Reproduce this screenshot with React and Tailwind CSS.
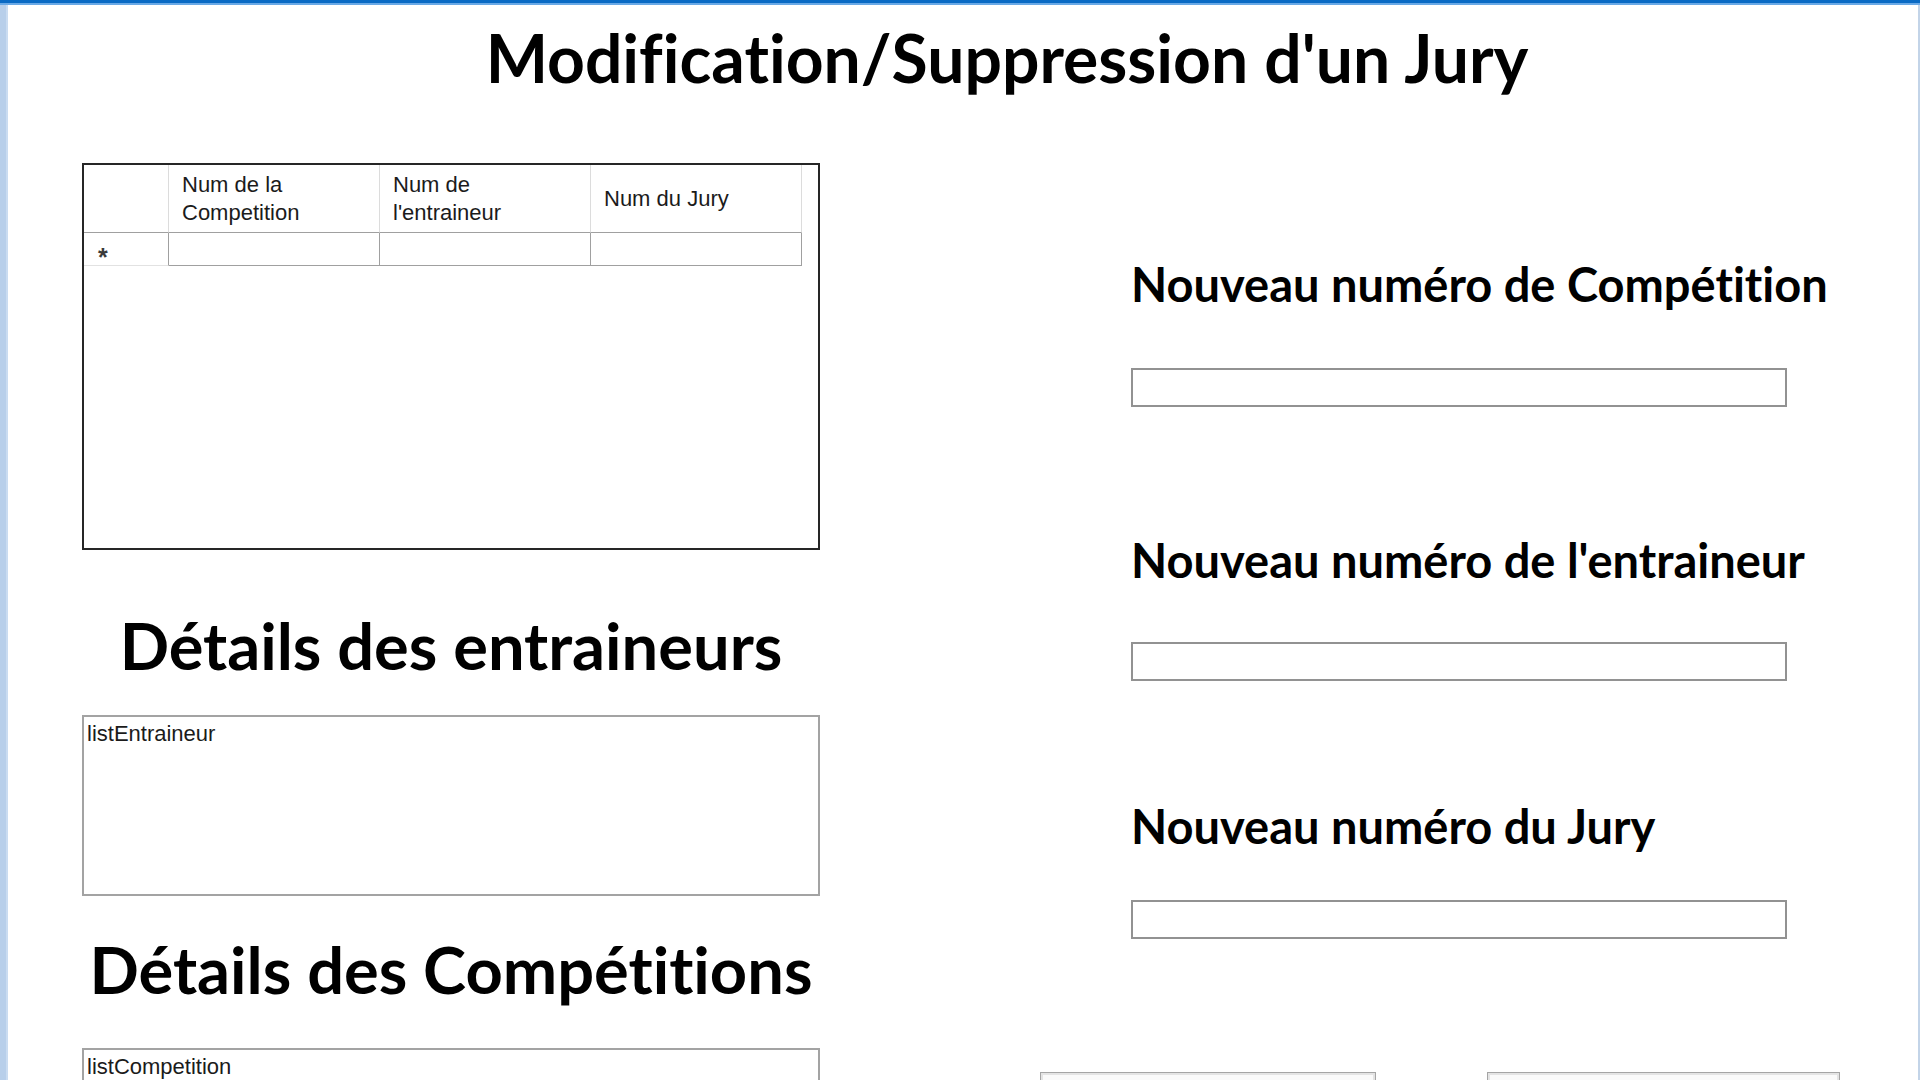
import React from 'react';

const bigTitle = "font-['Lato',sans-serif] font-bold text-black leading-none whitespace-nowrap [font-variant-ligatures:none]";
const cellText = "font-['Liberation_Sans',Arial,sans-serif] text-[22px] leading-[28px] text-[#1b1b1b]";

const columns = [
    ['Num de la', 'Competition'],
    ['Num de', "l'entraineur"],
    ['Num du Jury'],
];

const JuryGrid = () => {
    return (
        <div className="mt-[72px] h-[387px] border-2 border-[#262626] bg-white">
            {/* en-tetes */}
            <div className="flex h-[68px]">
                <div className="w-[85px] border-r border-b border-r-[#dcdcdc] border-b-[#a0a0a0]" />
                {columns.map((lines, i) => (
                    <div
                        key={i}
                        className={"w-[211px] flex items-center pl-[13px] border-r border-b border-r-[#dcdcdc] border-b-[#a0a0a0] " + cellText}
                    >
                        <div>
                            {lines.map((l, j) => (
                                <div key={j}>{l}</div>
                            ))}
                        </div>
                    </div>
                ))}
            </div>

            {/* ligne vide */}
            <div className="flex h-[33px]">
                <div className="w-[85px] border-r border-b border-r-[#a0a0a0] border-b-[#e2e2e2] pl-[14px] pt-[12px] font-['Liberation_Sans',Arial,sans-serif] text-[25px] font-bold leading-none text-[#3a3a3a]">
                    *
                </div>
                {columns.map((_, i) => (
                    <div key={i} className="w-[211px] border-r border-b border-[#a0a0a0]" />
                ))}
            </div>
        </div>
    );
};

const ListBox = ({ label, className }) => (
    <div className={"border-2 border-[#a3a3a3] bg-white pl-[3px] pt-[3px] " + cellText + " " + className}>
        {label}
    </div>
);

const Field = ({ label, top, gap }) => (
    <>
        <div className={bigTitle + " text-[47px] ml-[91px] " + top}>{label}</div>
        <div className={"ml-[91px] w-[656px] h-[39px] border-2 border-[#929292] bg-white " + gap} />
    </>
);

const WinButton = ({ className }) => (
    <div className={"h-[60px] border border-[#a5a5a5] " + className}>
        <div className="h-full border-2 border-[#e4e4e4] bg-[#fafafa]" />
    </div>
);

export default function App() {
    return (
        <div className="w-[1920px] h-[1080px] overflow-hidden bg-white flex flex-col">
            <div className="h-[3px] shrink-0 bg-[#0a6ac4]" />
            <div className="h-[2px] shrink-0 bg-[#6aa9e6]" />

            <div className="flex-1 flex min-h-0">
                <div className="w-[6px] shrink-0 bg-[#b8cfea]" />
                <div className="w-[2px] shrink-0 bg-[#cadcf1]" />

                <div className="flex-1 flex flex-col min-w-0">
                    <h1 className={bigTitle + " mt-[20px] pl-[88px] text-center text-[66px]"}>
                        Modification/Suppression d'un Jury
                    </h1>

                    <div className="flex">
                        {/* colonne gauche */}
                        <div className="ml-[74px] w-[738px] shrink-0 flex flex-col">
                            <JuryGrid />

                            <h2 className={bigTitle + " mt-[63px] text-center text-[65px]"}>
                                Détails des entraineurs
                            </h2>
                            <ListBox label="listEntraineur" className="mt-[37px] h-[181px]" />

                            <h2 className={bigTitle + " mt-[41px] text-center text-[65px]"}>
                                Détails des Compétitions
                            </h2>
                            <ListBox label="listCompetition" className="mt-[46px] h-[200px]" />
                        </div>

                        {/* colonne droite */}
                        <div className="ml-[220px] flex-1 flex flex-col">
                            <Field label="Nouveau numéro de Compétition" top="mt-[170px]" gap="mt-[60px]" />
                            <Field label="Nouveau numéro de l'entraineur" top="mt-[130px]" gap="mt-[58px] h-[38px]" />
                            <Field label="Nouveau numéro du Jury" top="mt-[122px]" gap="mt-[50px] h-[38px]" />

                            <div className="mt-[133px] flex gap-[111px]">
                                <WinButton className="w-[336px]" />
                                <WinButton className="w-[353px]" />
                            </div>
                        </div>
                    </div>
                </div>

                <div className="w-[2px] shrink-0 bg-[#c3d4e8]" />
            </div>
        </div>
    );
}
